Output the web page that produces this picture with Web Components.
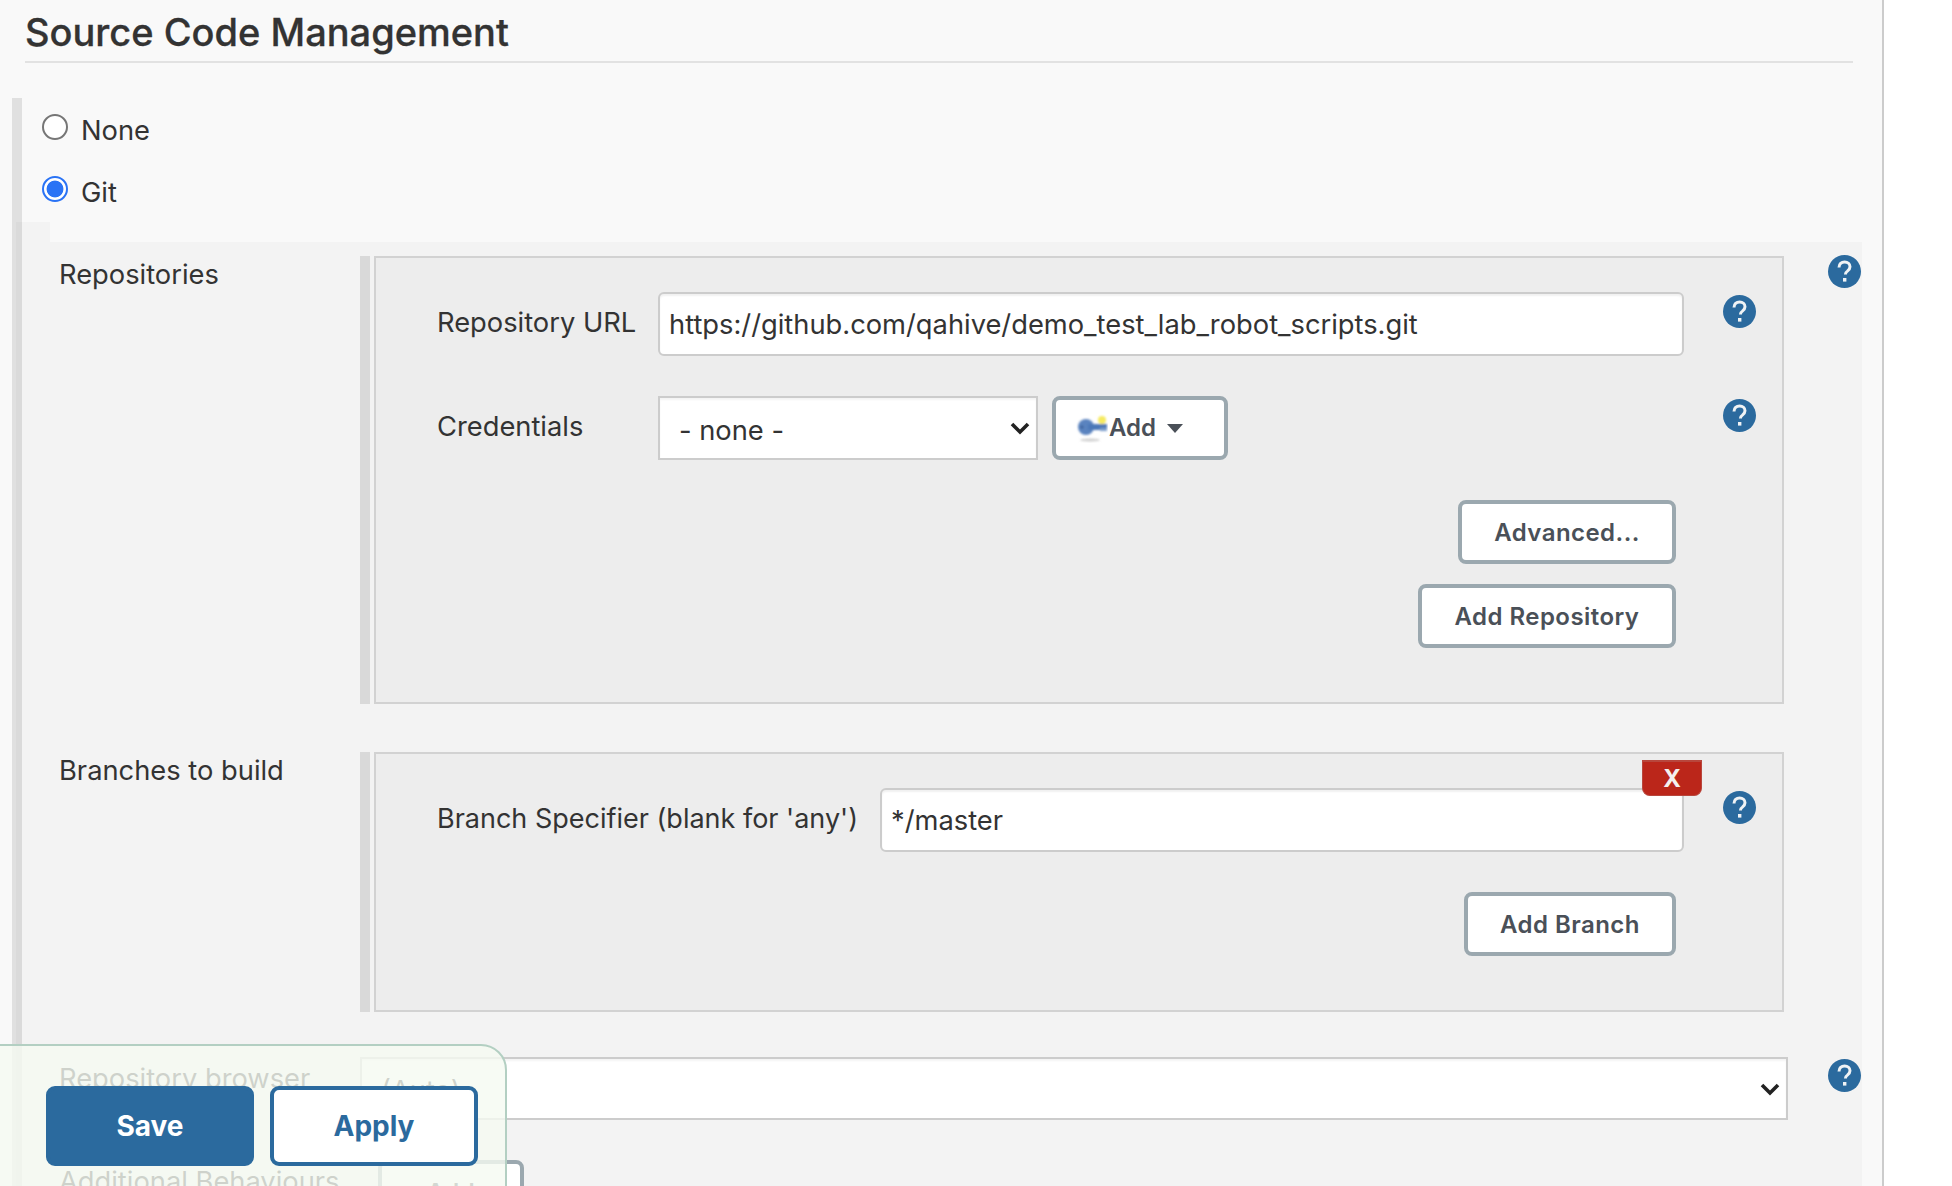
<!DOCTYPE html>
<html lang="en"><head><meta charset="utf-8"><title>Source Code Management</title>
<style>
html,body{margin:0;padding:0;height:1186px;overflow:hidden;background:#fff;font-family:Inter,"Liberation Sans",sans-serif;color:#333}
</style></head><body>
<scm-page>
  <section-head>Source Code Management</section-head>
  <radio-block>
    <radio-option>None</radio-option>
    <radio-option checked>Git</radio-option>
    <sub-panel>
      <panel-row label="Repositories" help helptop="-1px" end="44px">
        <hetero-box>
          <form-row label="Repository URL" col="221px" gap="40px"><text-field value="https://github.com/qahive/demo_test_lab_robot_scripts.git"></text-field></form-row>
          <form-row label="Credentials" col="221px" gap="40px">
            <select-field style="width:380px" value="- none -"></select-field>
            <jk-button slot="after" dropdown width="176px"><key-icon></key-icon>Add</jk-button>
          </form-row>
          <button-line gap="20px"><jk-button width="218px">Advanced...</jk-button></button-line>
          <button-line><jk-button width="258px">Add Repository</jk-button></button-line>
        </hetero-box>
      </panel-row>
      <panel-row label="Branches to build" top="48px" end="44px">
        <hetero-box>
          <delete-tab>X</delete-tab>
          <form-row label="Branch Specifier (blank for 'any')" col="443px" gap="40px" size="27px"><text-field value="*/master"></text-field></form-row>
          <button-line><jk-button width="212px">Add Branch</jk-button></button-line>
        </hetero-box>
      </panel-row>
      <panel-row label="Repository browser" top="45px" help helptop="2px" end="40px" labtop="5px">
        <select-field square value="(Auto)"></select-field>
      </panel-row>
      <panel-row label="Additional Behaviours" top="40px" end="40px" labtop="5px">
        <div style="padding-left:18px"><jk-button width="146px">Add</jk-button></div>
      </panel-row>
    </sub-panel>
  </radio-block>
  <bottom-bar>
    <jk-action primary>Save</jk-action>
    <jk-action>Apply</jk-action>
  </bottom-bar>
</scm-page>
<script>
function def(name, css, html, init){
  customElements.define(name, class extends HTMLElement{
    constructor(){super();const r=this.attachShadow({mode:'open'});r.innerHTML='<style>'+css+'</style>'+html;}
    connectedCallback(){if(init)init(this,this.shadowRoot);}
  });
}
const chev='<svg class="chev" width="20" height="14" viewBox="0 0 20 14"><path d="M2 3l8 8 8-8" fill="none" stroke="#222" stroke-width="3.6"/></svg>';
const helpSvg='<svg width="33" height="33" viewBox="0 0 33 33"><circle cx="16.5" cy="16.5" r="16.5" fill="#2b6a9e"/><path d="M11 12.4c0-3.3 2.4-5.4 5.6-5.4 3.2 0 5.4 2 5.4 4.8 0 2-1 3.1-2.6 4.3-1.4 1-2 1.7-2 3.3" fill="none" stroke="#f0f3f5" stroke-width="3"/><rect x="15" y="23" width="3.4" height="3.6" fill="#f0f3f5"/></svg>';

def('scm-page',':host{display:block;position:relative;width:1882px;height:1186px;background:#f9f9f9;border-right:2px solid #ccc;overflow:hidden;font-family:Inter,"Liberation Sans",sans-serif;color:#333}','<slot></slot>');
def('section-head',':host{display:block;margin:0 29px 35px 25px;height:61px;box-sizing:content-box;border-bottom:2px solid #e2e2e2;font-size:38px;font-weight:500;line-height:64px;color:#333;letter-spacing:0;-webkit-text-stroke:.3px #333}','<slot></slot>');
def('radio-block',':host{display:block;margin-left:12px;border-left:10px solid #e0e0e0;padding-top:16px}','<slot></slot>');
def('radio-option',`:host{display:flex;align-items:flex-start;gap:13px;height:26px;margin:0 0 36px 20px;font-size:27.3px;line-height:33px}
  .r{width:26px;height:26px;box-sizing:border-box;border-radius:50%;border:2px solid #767676;background:#fff;margin:0;appearance:none;flex:none}
  .r:checked{border-color:#2a73f5;background:radial-gradient(circle,#2a73f5 0 8px,#fff 8.8px)}
  span{white-space:nowrap}`,'<input class="r" type="radio" name="scm"><span><slot></slot></span>',(h,r)=>{r.querySelector('input').checked=h.hasAttribute('checked')});
def('sub-panel',`:host{display:block;margin:-16px 0 0 -6px;width:1846px}
  .tab{width:34px;height:20px;background:rgba(0,0,0,.025)}
  .body{background:rgba(0,0,0,.025);padding:14px 1px 60px 43px}`,'<div class="tab"></div><div class="body"><slot></slot></div>');
def('panel-row',`:host{display:grid;grid-template-columns:301px minmax(0,1fr) 33px;font-size:27.3px}
  .lab{line-height:34px;padding-top:2px;white-space:nowrap}`,'<div class="lab"></div><div class="c"><slot></slot></div><div class="h"></div>',(h,r)=>{
    const l=r.querySelector('.lab');
    l.textContent=h.getAttribute('label');
    if(h.getAttribute('labtop'))l.style.paddingTop=h.getAttribute('labtop');
    h.style.marginTop=h.getAttribute('top')||'0';
    r.querySelector('.c').style.marginRight=h.getAttribute('end')||'43px';
    if(h.hasAttribute('help')){const x=r.querySelector('.h');x.innerHTML='<help-icon></help-icon>';x.style.marginTop=h.getAttribute('helptop')||'0';}
  });
def('hetero-box',`:host{display:flex;align-items:stretch;gap:4px}
  .bar{width:10px;background:#d9d9d9;flex:none}
  .box{position:relative;flex:1;border:2px solid #d2d2d2;background:#ededed;padding:34px 26px 54px 61px;display:flex;flex-direction:column}`,'<div class="bar"></div><div class="box"><slot></slot></div>');
def('form-row',`:host{display:grid;align-items:start;font-size:27.3px;line-height:34px}
  .l{padding-top:14px;white-space:nowrap}
  .f{display:flex;gap:14px;min-width:0}
  .h{margin-left:39px;padding-top:3px}`,'<div class="l"></div><div class="f"><slot></slot><slot name="after"></slot></div><div class="h"><help-icon></help-icon></div>',(h,r)=>{
    r.querySelector('.l').textContent=h.getAttribute('label');
    if(h.getAttribute('size'))r.querySelector('.l').style.fontSize=h.getAttribute('size');
    h.style.gridTemplateColumns=h.getAttribute('col')+' minmax(0,1fr) auto';
    h.style.marginBottom=h.getAttribute('gap')||'0';
  });
def('text-field',`:host{display:block;width:100%}
  input{display:block;width:100%;box-sizing:border-box;height:64px;border:2px solid #ccc;border-radius:6px;background:#fff;box-shadow:inset 0 2px 2px #f1f1f1;padding:0 9px;margin:0;font:400 27.3px Inter,"Liberation Sans",sans-serif;color:#333;outline:none}`,'<input type="text">',(h,r)=>{r.querySelector('input').value=h.getAttribute('value')});
def('select-field',`:host{display:block;position:relative;height:64px}
  :host([square]){height:63px}
  select{display:block;width:100%;height:100%;box-sizing:border-box;appearance:none;border:2px solid #ccc;border-radius:0;background:#fff;padding:4px 19px 0;margin:0;font:400 27.3px Inter,"Liberation Sans",sans-serif;color:#333;box-shadow:inset 0 2px 2px #f4f4f4;outline:none}
  .chev{position:absolute;right:8px;top:25px}`,'<select></select>'+chev,(h,r)=>{const o=document.createElement('option');o.textContent=h.getAttribute('value');r.querySelector('select').append(o);});
def('jk-button',`:host{display:inline-flex;box-sizing:border-box;height:64px;flex:none;border:4px solid #9ba8af;border-radius:8px;background:#fff;color:#4a5058;font-size:24px;font-weight:600;letter-spacing:.45px;align-items:center;justify-content:center;white-space:nowrap}
  :host([dropdown]){justify-content:flex-start;padding-left:20px;letter-spacing:0}
  .car{display:none;margin-left:11px;width:0;height:0;border-left:8px solid transparent;border-right:8px solid transparent;border-top:9px solid #4a5058}
  :host([dropdown]) .car{display:block}`,'<slot></slot><span class="car"></span>',(h)=>{h.style.width=h.getAttribute('width')});
def('key-icon',':host{display:block;width:32px;height:30px;flex:none;margin-right:1px}svg{display:block}','<svg width="32" height="30" viewBox="0 0 32 30"><defs><filter id="b" x="-20%" y="-20%" width="140%" height="140%"><feGaussianBlur stdDeviation=".8"/></filter></defs><g filter="url(#b)"><ellipse cx="14" cy="27" rx="10" ry="1.5" fill="#cfcfcf"/><circle cx="26" cy="7" r="4" fill="#f6ea60"/><circle cx="10" cy="14" r="8" fill="#5a83bf"/><rect x="12" y="11" width="19" height="6" fill="#4c78b8"/><rect x="24" y="15" width="7" height="3" fill="#7a9ccb"/><circle cx="6" cy="14" r="1.6" fill="#3a5f98"/></g></svg>');
def('button-line',':host{display:flex;justify-content:flex-end;padding-right:80px}',"<slot></slot>",(h)=>{h.style.marginBottom=h.getAttribute('gap')||'0';});
def('delete-tab',':host{position:absolute;top:6px;right:80px;z-index:2;width:60px;height:36px;box-sizing:border-box;background:#bb261a;border:1px solid #b8463c;border-top-width:2px;border-radius:0 0 8px 8px;color:#f4f0ef;font-size:24px;font-weight:700;line-height:33px;text-align:center}','<slot></slot>');
def('help-icon',':host{display:block;width:33px;height:33px}svg{display:block}',helpSvg);
def('bottom-bar',':host{position:absolute;left:-2px;top:1044px;width:509px;height:160px;display:flex;gap:16px;align-items:flex-start;padding:40px 0 0 46px;box-sizing:border-box;border:2px solid #b3cfc2;border-radius:0 26px 0 0;background:rgba(245,250,241,.8);z-index:5}','<slot></slot>');
def('jk-action',`:host{display:flex;align-items:center;justify-content:center;box-sizing:border-box;width:208px;height:80px;border:4px solid #2b6a9e;border-radius:9px;background:#fff;color:#2b6a9e;font-size:28px;font-weight:700}
  :host([primary]){background:#2b6a9e;color:#fff}`,'<slot></slot>');
</script>
</body></html>
